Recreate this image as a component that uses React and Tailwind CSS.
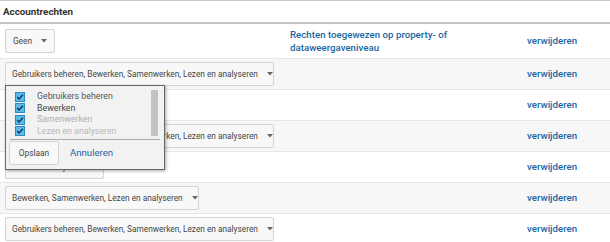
import React from "react";

const FULL = "Gebruikers beheren, Bewerken, Samenwerken, Lezen en analyseren";

const Caret = () => (
  <svg width="6" height="4" viewBox="0 0 6 4" className="ml-[9px] shrink-0">
    <path d="M0 0h6L3 3.5z" fill="#666" />
  </svg>
);

// grey dropdown button used in every row
const SelectButton = ({ label, width, center }) => (
  <div
    className={`flex items-center h-[24px] pl-[6px] pr-[6px] border border-[#d4d4d4] rounded-[2px] bg-[#f8f8f8] text-[8.3px] text-[#444] whitespace-nowrap ${width} ${center ? "justify-center" : ""}`}
  >
    <span className={center ? "" : "flex-1"}>{label}</span>
    <Caret />
  </div>
);

const Check = () => (
  <svg width="10" height="10" viewBox="0 0 10 10" className="shrink-0">
    <rect x="0.5" y="0.5" width="9" height="9" fill="#5bbbe6" stroke="#2b8cc4" />
    <path d="M2.2 5.1l1.9 1.9 3.8-4.3" fill="none" stroke="#0d3f66" strokeWidth="1.5" />
  </svg>
);

const Remove = () => (
  <a className="text-[9.7px] font-medium text-[#1865a3] cursor-pointer">verwijderen</a>
);

const Row = ({ gray, children }) => (
  <div
    className={`flex items-center border-b border-[#e6e6e6] h-[31px] ${gray ? "bg-[#f7f7f7]" : "bg-white"}`}
  >
    <div className="w-[527px] pl-[5px] flex items-center">{children}</div>
    <Remove />
  </div>
);

const Popup = () => (
  <div className="absolute left-[5px] top-[85px] w-[160px] h-[85px] bg-[#f2f2f2] border border-[#666] shadow-[1px_1px_3px_rgba(0,0,0,0.35)] z-10">
    <div className="relative h-[54px] mx-[4px] border-b border-[#aaa]">
      <ul className="pt-[5px] pl-[5px] text-[8.8px] leading-[11.5px]">
        {[
          ["Gebruikers beheren", "text-[#555]"],
          ["Bewerken", "text-[#444]"],
          ["Samenwerken", "text-[#b0b0b0]"],
          ["Lezen en analyseren", "text-[#b8b8b8]"],
        ].map(([t, c]) => (
          <li key={t} className="flex items-center h-[11.5px]">
            <Check />
            <span className={`ml-[12px] ${c}`}>{t}</span>
          </li>
        ))}
      </ul>
      <div className="absolute right-[2px] top-[4px] w-[7px] h-[46px] bg-[#c3c3c3]" />
    </div>
    <div className="flex items-center pl-[3px] pt-[1px]">
      <button className="h-[24px] w-[50px] border border-[#d4d4d4] rounded-[2px] bg-[#f8f8f8] text-[8.3px] text-[#444]">
        Opslaan
      </button>
      <span className="ml-[11px] text-[9.6px] text-[#1865a3]">Annuleren</span>
    </div>
  </div>
);

export default function App() {
  return (
    <div className="relative w-[610px] h-[242px] bg-white overflow-hidden font-['Roboto',_'Liberation_Sans',_sans-serif]">
      <div className="border-t border-[#c8c8c8] h-[24px] flex items-center pl-[3px] pt-[1px] border-b-2 border-b-[#c4c4c4]">
        <span className="text-[9.8px] font-bold text-[#333]">Accountrechten</span>
      </div>

      <div className="flex items-center h-[35px] border-b border-[#e6e6e6]">
        <div className="w-[290px] pl-[5px]">
          <SelectButton label="Geen" width="w-[50px]" center />
        </div>
        <div className="w-[237px] text-[9.7px] font-medium leading-[13px] text-[#1865a3]">
          Rechten toegewezen op property- of
          <br />
          dataweergaveniveau
        </div>
        <Remove />
      </div>

      <Row gray>
        <SelectButton label={FULL} width="w-[269px]" />
      </Row>
      <Row>
        <SelectButton label="Gebruikers beheren" width="w-[120px]" />
      </Row>
      <Row gray>
        <SelectButton label={FULL} width="w-[269px]" />
      </Row>
      <Row>
        <SelectButton label="Lezen en analyseren" width="w-[99px]" />
      </Row>
      <Row gray>
        <SelectButton label="Bewerken, Samenwerken, Lezen en analyseren" width="w-[194px]" />
      </Row>
      <Row>
        <SelectButton label={FULL} width="w-[269px]" />
      </Row>

      <Popup />
    </div>
  );
}
